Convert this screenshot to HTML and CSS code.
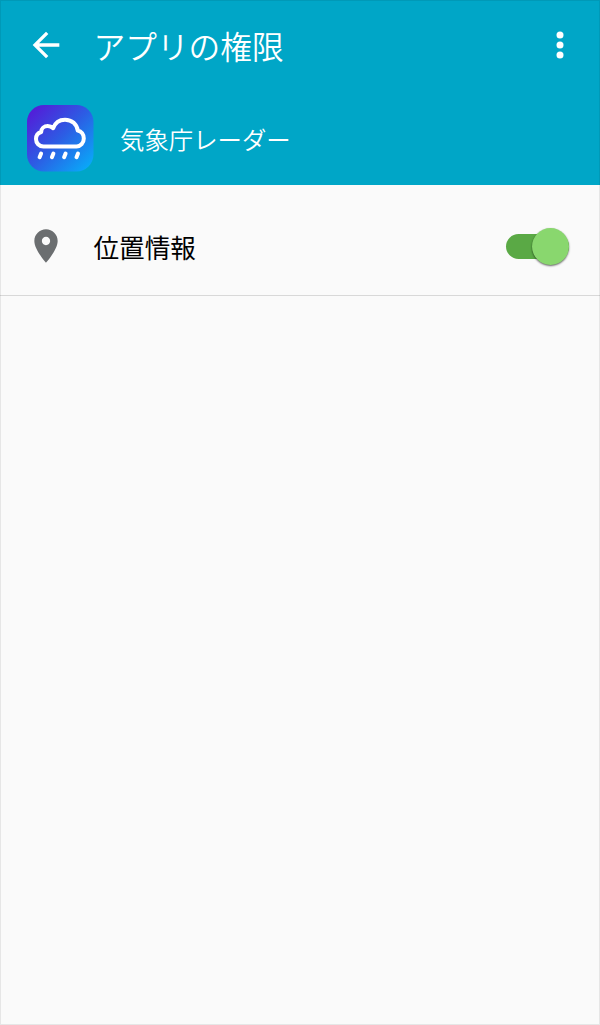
FILE: index.html
```html
<!DOCTYPE html>
<html lang="ja">
  <head>
    <meta charset="UTF-8" />
    <meta name="viewport" content="width=device-width, initial-scale=1.0" />
    <title>アプリの権限</title>
    <link rel="stylesheet" href="styles.css">
  </head>
  <body>
    <div class="screen">
      <header class="header">
        <div class="toolbar">
          <svg class="back" viewBox="0 0 24 24">
            <path d="M20 11H7.83l5.59-5.59L12 4l-8 8 8 8 1.41-1.41L7.83 13H20v-2z" />
          </svg>
          <h1>アプリの権限</h1>
          <svg class="more" viewBox="0 0 8 28">
            <circle cx="4" cy="4" r="3.5" />
            <circle cx="4" cy="14" r="3.5" />
            <circle cx="4" cy="24" r="3.5" />
          </svg>
        </div>
        <div class="app-info">
          <svg class="app-icon" viewBox="0 0 67 67">
            <defs>
              <linearGradient id="sky" x1="0" y1="0" x2="1" y2="1">
                <stop offset="0" stop-color="#5a12d6" />
                <stop offset="0.5" stop-color="#2c5de4" />
                <stop offset="1" stop-color="#04b4fb" />
              </linearGradient>
            </defs>
            <rect width="66.5" height="66.5" rx="17" fill="url(#sky)" />
            <path class="cloud" d="M16.500 41.500C12 41.500 9 38 9 34C9 30.500 11 28 14.200 27C14.200 23.500 17.200 21 20.700 21C22.700 21 24.700 21.800 26.200 23.200C28 18 32.500 14.700 38 14.700C45 14.700 50 19.500 50.700 25.500C54.500 26.200 56.800 29.500 56.800 33.500C56.800 38 53.500 41.500 49.500 41.500Z" />
            <path class="rain" d="M14.100 48.600L12.600 52.200M26.400 48.600L24.900 52.200M38.600 48.600L37.100 52.200M51 48.600L49.500 52.200" />
          </svg>
          <span class="app-name">気象庁レーダー</span>
        </div>
      </header>
      <div class="permission">
        <svg class="pin" viewBox="0 0 24 24">
          <path d="M12 2C8.130 2 5 5.130 5 9c0 5.250 7 13 7 13s7-7.750 7-13c0-3.870-3.130-7-7-7zm0 9.500c-1.380 0-2.500-1.120-2.500-2.500s1.120-2.500 2.500-2.500 2.500 1.120 2.500 2.500-1.120 2.500-2.500 2.500z" />
        </svg>
        <span class="label">位置情報</span>
        <div class="switch">
          <div class="knob"></div>
        </div>
      </div>
    </div>
  </body>
</html>
```

FILE: styles.css
```css
* {
  margin: 0;
  padding: 0;
  box-sizing: border-box;
}

body {
  font-family: "Noto Sans CJK JP", sans-serif;
  background: #fafafa;
}

.screen {
  position: relative;
  height: 100vh;
  overflow: hidden;
}

/* thin frame over the whole screen */
.screen::after {
  content: "";
  position: absolute;
  inset: 0;
  border: 1px solid rgba(0, 0, 0, 0.08);
  pointer-events: none;
}

.header {
  height: 185px;
  background: #00a6c7;
  color: #fff;
}

.toolbar {
  display: flex;
  align-items: center;
  height: 90px;
  padding: 0 36px 0 26px;
}

.back {
  width: 40px;
  height: 40px;
  fill: #fff;
}

.toolbar h1 {
  flex: 1;
  margin-left: 27.5px;
  font-size: 31.7px;
  font-weight: 350;
  line-height: 48px;
}

.more {
  width: 8px;
  height: 28px;
  fill: #fff;
}

.app-info {
  display: flex;
  align-items: center;
  height: 67px;
  margin-top: 15px;
  padding-left: 27px;
}

.app-icon {
  width: 67px;
  height: 67px;
}

.cloud {
  fill: none;
  stroke: #fff;
  stroke-width: 4;
  stroke-linejoin: round;
}

.rain {
  stroke: #fff;
  stroke-width: 4;
  stroke-linecap: round;
}

.app-name {
  margin-left: 26px;
  font-size: 24.4px;
  font-weight: 350;
  line-height: 36px;
}

.permission {
  display: flex;
  align-items: center;
  height: 111px;
  padding: 12px 31px 0 26px;
  border-bottom: 1px solid #d8d8d8;
}

.pin {
  width: 40px;
  height: 40px;
  fill: #6b6e70;
}

.label {
  flex: 1;
  margin-left: 27.5px;
  padding-top: 2px;
  font-size: 25.6px;
  line-height: 38px;
  color: #000;
}

.switch {
  display: flex;
  align-items: center;
  justify-content: flex-end;
  width: 63px;
  height: 25px;
  border-radius: 13px;
  background: #5aa945;
}

.knob {
  flex: none;
  width: 37px;
  height: 37px;
  border-radius: 50%;
  background: #89d76e;
  box-shadow: 0 1px 2px rgba(0, 0, 0, 0.6);
}
```
